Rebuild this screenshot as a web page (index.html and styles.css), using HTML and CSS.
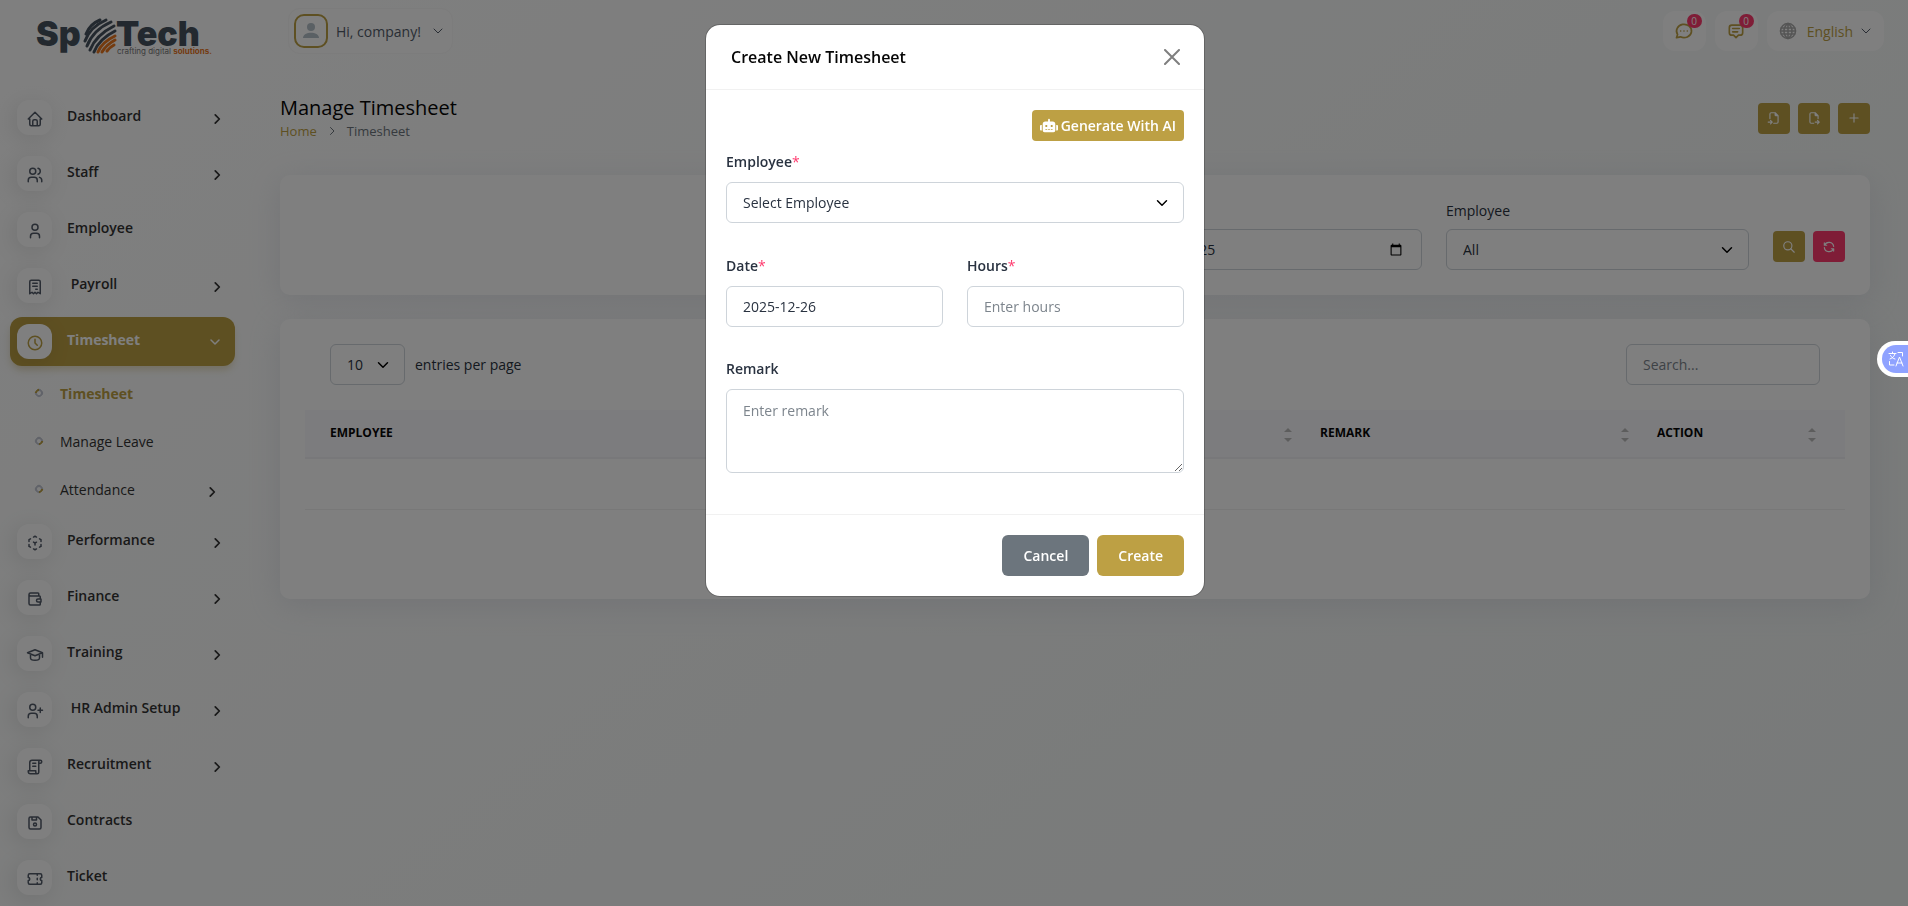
FILE: index.html
```html
<!DOCTYPE html>
<html lang="en">
<head>
    <meta charset="UTF-8">
    <meta name="viewport" content="width=device-width, initial-scale=1">
    <title>Manage Timesheet</title>
    <link rel="stylesheet" href="styles.css">
</head>
<body>

<!-- icon sprite -->
<svg class="sprite" aria-hidden="true">
    <symbol id="home" viewBox="0 0 24 24"><path d="M5 12H3l9-9 9 9h-2M5 12v7a2 2 0 0 0 2 2h10a2 2 0 0 0 2-2v-7M9 21v-6a2 2 0 0 1 2-2h2a2 2 0 0 1 2 2v6"/></symbol>
    <symbol id="users" viewBox="0 0 24 24"><circle cx="9" cy="7" r="4"/><path d="M3 21v-2a4 4 0 0 1 4-4h4a4 4 0 0 1 4 4v2M16 3.130a4 4 0 0 1 0 7.750M21 21v-2a4 4 0 0 0-3-3.850"/></symbol>
    <symbol id="user" viewBox="0 0 24 24"><circle cx="12" cy="7" r="4"/><path d="M6 21v-2a4 4 0 0 1 4-4h4a4 4 0 0 1 4 4v2"/></symbol>
    <symbol id="receipt" viewBox="0 0 24 24"><path d="M5 21V5a2 2 0 0 1 2-2h10a2 2 0 0 1 2 2v16l-3-2-2 2-2-2-2 2-2-2-3 2M9 7h6M9 11h6M13 15h2"/></symbol>
    <symbol id="clock" viewBox="0 0 24 24"><circle cx="12" cy="12" r="9"/><path d="M12 7v5l3 3"/></symbol>
    <symbol id="cube" viewBox="0 0 24 24"><path d="M6 17.600l-2-1.100V14M4 10V7.500l2-1.100M10 4.100L12 3l2 1.100M18 6.400l2 1.100V10M20 14v2.500l-2 1.120M14 19.900L12 21l-2-1.100M12 12l2-1.100M12 12v2.500M12 12l-2-1.120"/></symbol>
    <symbol id="wallet" viewBox="0 0 24 24"><path d="M17 8V5a1 1 0 0 0-1-1H6a2 2 0 0 0 0 4h12a1 1 0 0 1 1 1v3M19 16v3a1 1 0 0 1-1 1H6a2 2 0 0 1-2-2V6M20 12v4h-4a2 2 0 0 1 0-4h4"/></symbol>
    <symbol id="school" viewBox="0 0 24 24"><path d="M22 9L12 5 2 9l10 4 10-4v6M6 10.600V16a6 3 0 0 0 12 0v-5.400"/></symbol>
    <symbol id="user-plus" viewBox="0 0 24 24"><circle cx="9" cy="7" r="4"/><path d="M3 21v-2a4 4 0 0 1 4-4h4a4 4 0 0 1 4 4v2M16 11h6M19 8v6"/></symbol>
    <symbol id="script" viewBox="0 0 24 24"><path d="M15 21H6a3 3 0 0 1-3-3v-1h10v2a2 2 0 0 0 4 0V5a2 2 0 1 1 2 2h-2M19 3H8a3 3 0 0 0-3 3v11M9 7h4M9 11h4"/></symbol>
    <symbol id="floppy" viewBox="0 0 24 24"><path d="M6 4h10l4 4v10a2 2 0 0 1-2 2H6a2 2 0 0 1-2-2V6a2 2 0 0 1 2-2M14 4v4H8V4"/><circle cx="12" cy="14" r="2"/></symbol>
    <symbol id="ticket" viewBox="0 0 24 24"><path d="M15 5v2M15 11v2M15 17v2M5 5h14a2 2 0 0 1 2 2v3a2 2 0 0 0 0 4v3a2 2 0 0 1-2 2H5a2 2 0 0 1-2-2v-3a2 2 0 0 0 0-4V7a2 2 0 0 1 2-2"/></symbol>
    <symbol id="message-circle" viewBox="0 0 24 24"><path d="M3 20l1.300-3.900a9 8 0 1 1 3.400 2.900L3 20M12 12v.01M8 12v.01M16 12v.01"/></symbol>
    <symbol id="message" viewBox="0 0 24 24"><path d="M12 20l-3-3H7a3 3 0 0 1-3-3V8a3 3 0 0 1 3-3h10a3 3 0 0 1 3 3v6a3 3 0 0 1-3 3h-2l-3 3M8 9h8M8 13h6"/></symbol>
    <symbol id="world" viewBox="0 0 24 24"><circle cx="12" cy="12" r="10"/><path d="M3 8h18M3 16h18M2 12h20M12 2v20M12 2a12 12 0 0 0 0 20M12 2a12 12 0 0 1 0 20"/></symbol>
    <symbol id="file-import" viewBox="0 0 24 24"><path d="M14 3v4a1 1 0 0 0 1 1h4M5 13V5a2 2 0 0 1 2-2h7l5 5v11a2 2 0 0 1-2 2h-5.500M2 19h7m-3-3l3 3-3 3"/></symbol>
    <symbol id="file-export" viewBox="0 0 24 24"><path d="M14 3v4a1 1 0 0 0 1 1h4M11.500 21H7a2 2 0 0 1-2-2V5a2 2 0 0 1 2-2h7l5 5v5m-5 6h7m-3-3l3 3-3 3"/></symbol>
    <symbol id="plus" viewBox="0 0 24 24"><path d="M12 5v14M5 12h14"/></symbol>
    <symbol id="search" viewBox="0 0 24 24"><circle cx="10" cy="10" r="7"/><path d="M21 21l-6-6"/></symbol>
    <symbol id="refresh" viewBox="0 0 24 24"><path d="M20 11a8.100 8.100 0 0 0-15.500-2M4 5v4h4M4 13a8.100 8.100 0 0 0 15.500 2M20 19v-4h-4"/></symbol>
    <symbol id="chevron-right" viewBox="0 0 24 24"><path d="M9 5l7 7-7 7"/></symbol>
    <symbol id="chevron-down" viewBox="0 0 24 24"><path d="M4 8l8 8 8-8"/></symbol>
    <symbol id="close" viewBox="0 0 16 16"><path d="M1 1l14 14M15 1L1 15"/></symbol>
    <symbol id="robot" viewBox="0 0 20 16"><path fill-rule="evenodd" d="M9 3V1a1 1 0 0 1 2 0v2h3a3 3 0 0 1 3 3v7a2 2 0 0 1-2 2H5a2 2 0 0 1-2-2V6a3 3 0 0 1 3-3zM6 7v2h2V7zM12 7v2h2V7zM6 11.500v1h2v-1zM9 11.500v1h2v-1zM12 11.500v1h2v-1zM2 7v6H1a1 1 0 0 1-1-1V8a1 1 0 0 1 1-1zM18 7h1a1 1 0 0 1 1 1v4a1 1 0 0 1-1 1h-1z"/></symbol>
</svg>

<div class="layout">
    <nav class="sidebar">
        <a class="logo" href="#">
            <svg width="180" height="44" viewBox="0 0 180 44" role="img" aria-label="SpoTech">
                <text class="logo-name" x="0" y="31">Sp</text>
                <text class="logo-name" x="80" y="31">Tech</text>
                <g class="logo-lines">
                    <path d="M50 19Q54 9 64 5"/>
                    <path d="M49 26Q54 12 70 5"/>
                    <path d="M51 31Q57 15 75 7"/>
                    <path d="M54 35Q60 20 78 11"/>
                    <path d="M58 37Q63 24 79 16"/>
                </g>
                <g class="logo-lines logo-orange">
                    <path d="M62 37Q66 27 79 21"/>
                    <path d="M66 37Q70 30 79 25"/>
                    <path d="M71 36Q74 32 78 30"/>
                </g>
                <text class="logo-tag" x="81" y="39">crafting digital <tspan class="logo-strong">solutions.</tspan></text>
            </svg>
        </a>
        <ul class="menu">
            <li><a href="#" class="menu-link"><span class="micon"><svg><use href="#home"/></svg></span><span class="mtext">Dashboard</span><svg class="arrow"><use href="#chevron-right"/></svg></a></li>
            <li><a href="#" class="menu-link"><span class="micon"><svg><use href="#users"/></svg></span><span class="mtext">Staff</span><svg class="arrow"><use href="#chevron-right"/></svg></a></li>
            <li><a href="#" class="menu-link"><span class="micon"><svg><use href="#user"/></svg></span><span class="mtext">Employee</span></a></li>
            <li><a href="#" class="menu-link"><span class="micon"><svg><use href="#receipt"/></svg></span><span class="mtext">&nbsp;Payroll</span><svg class="arrow"><use href="#chevron-right"/></svg></a></li>
            <li>
                <a href="#" class="menu-link active"><span class="micon"><svg><use href="#clock"/></svg></span><span class="mtext">Timesheet</span><svg class="arrow"><use href="#chevron-down"/></svg></a>
                <ul class="submenu">
                    <li><a href="#" class="sub-link current"><span class="dot"></span>Timesheet</a></li>
                    <li><a href="#" class="sub-link"><span class="dot"></span>Manage Leave</a></li>
                    <li><a href="#" class="sub-link"><span class="dot"></span>Attendance<svg class="arrow"><use href="#chevron-right"/></svg></a></li>
                </ul>
            </li>
            <li><a href="#" class="menu-link"><span class="micon"><svg><use href="#cube"/></svg></span><span class="mtext">Performance</span><svg class="arrow"><use href="#chevron-right"/></svg></a></li>
            <li><a href="#" class="menu-link"><span class="micon"><svg><use href="#wallet"/></svg></span><span class="mtext">Finance</span><svg class="arrow"><use href="#chevron-right"/></svg></a></li>
            <li><a href="#" class="menu-link"><span class="micon"><svg><use href="#school"/></svg></span><span class="mtext">Training</span><svg class="arrow"><use href="#chevron-right"/></svg></a></li>
            <li><a href="#" class="menu-link"><span class="micon"><svg><use href="#user-plus"/></svg></span><span class="mtext">&nbsp;HR Admin Setup</span><svg class="arrow"><use href="#chevron-right"/></svg></a></li>
            <li><a href="#" class="menu-link"><span class="micon"><svg><use href="#script"/></svg></span><span class="mtext">Recruitment</span><svg class="arrow"><use href="#chevron-right"/></svg></a></li>
            <li><a href="#" class="menu-link"><span class="micon"><svg><use href="#floppy"/></svg></span><span class="mtext">Contracts</span></a></li>
            <li><a href="#" class="menu-link"><span class="micon"><svg><use href="#ticket"/></svg></span><span class="mtext">Ticket</span></a></li>
        </ul>
    </nav>

    <div class="main">
        <header class="topbar">
            <button type="button" class="user-btn">
                <span class="avatar"><svg viewBox="0 0 16 16"><circle cx="8" cy="4" r="4"/><path d="M0 15c0-7 16-7 16 0z"/></svg></span>
                Hi, company!
                <svg class="caret"><use href="#chevron-down"/></svg>
            </button>
            <div class="topbar-right">
                <button type="button" class="head-btn" aria-label="Messages"><svg><use href="#message-circle"/></svg><span class="badge">0</span></button>
                <button type="button" class="head-btn" aria-label="Comments"><svg><use href="#message"/></svg><span class="badge">0</span></button>
                <button type="button" class="head-btn lang"><svg class="world"><use href="#world"/></svg>English<svg class="caret"><use href="#chevron-down"/></svg></button>
            </div>
        </header>

        <div class="page-header">
            <div>
                <h1>Manage Timesheet</h1>
                <div class="breadcrumb"><a href="#">Home</a><svg><use href="#chevron-right"/></svg><span>Timesheet</span></div>
            </div>
            <div class="actions">
                <button type="button" class="btn-icon" aria-label="Import"><svg><use href="#file-import"/></svg></button>
                <button type="button" class="btn-icon" aria-label="Export"><svg><use href="#file-export"/></svg></button>
                <button type="button" class="btn-icon" aria-label="Create"><svg><use href="#plus"/></svg></button>
            </div>
        </div>

        <form class="card filters">
            <div class="field">
                <label for="filterDate">Date</label>
                <input type="date" id="filterDate" class="control" value="2025-12-25">
            </div>
            <div class="field">
                <label for="filterEmployee">Employee</label>
                <select id="filterEmployee" class="control"><option>All</option></select>
            </div>
            <div class="actions">
                <button type="button" class="btn-icon" aria-label="Apply"><svg><use href="#search"/></svg></button>
                <button type="reset" class="btn-icon danger" aria-label="Reset"><svg><use href="#refresh"/></svg></button>
            </div>
        </form>

        <div class="card list">
            <div class="list-top">
                <div class="per-page">
                    <select id="perPage" class="control"><option>10</option></select>
                    <label for="perPage">entries per page</label>
                </div>
                <input type="text" class="control search" placeholder="Search..." aria-label="Search">
            </div>
            <table>
                <thead>
                    <tr>
                        <th class="col-employee">Employee<span class="sorter"></span></th>
                        <th>Hours<span class="sorter"></span></th>
                        <th class="col-remark">Remark<span class="sorter"></span></th>
                        <th class="col-action">Action<span class="sorter"></span></th>
                    </tr>
                </thead>
                <tbody>
                    <tr><td colspan="4"></td></tr>
                </tbody>
            </table>
        </div>
    </div>
</div>

<div class="backdrop">
    <form class="modal" role="dialog" aria-labelledby="modalTitle">
        <div class="modal-header">
            <h2 id="modalTitle">Create New Timesheet</h2>
            <button type="button" class="close" aria-label="Close"><svg><use href="#close"/></svg></button>
        </div>
        <div class="modal-body">
            <button type="button" class="btn-ai"><svg><use href="#robot"/></svg>Generate With AI</button>
            <div class="group">
                <label for="employee">Employee<span class="req">*</span></label>
                <select id="employee" class="control"><option>Select Employee</option></select>
            </div>
            <div class="row">
                <div class="group">
                    <label for="date">Date<span class="req">*</span></label>
                    <input type="text" id="date" class="control" value="2025-12-26">
                </div>
                <div class="group">
                    <label for="hours">Hours<span class="req">*</span></label>
                    <input type="text" id="hours" class="control" placeholder="Enter hours">
                </div>
            </div>
            <div class="group">
                <label for="remark">Remark</label>
                <textarea id="remark" class="control" placeholder="Enter remark"></textarea>
            </div>
        </div>
        <div class="modal-footer">
            <button type="button" class="btn secondary">Cancel</button>
            <button type="submit" class="btn">Create</button>
        </div>
    </form>
</div>

<button type="button" class="translate" aria-label="Translate">
    <span>
        <svg viewBox="0 0 16 16"><path d="M1 2.500h7M4.500 1v1.500M2 8c3-1 4.500-3 5-5.500M2.500 4.500C3.500 6.500 5 7.500 7 8M10 1.500h4.500V5M1.500 10.500V14H6M8 15l3.500-9L15 15M9 12h5"/></svg>
    </span>
</button>

</body>
</html>
```
FILE: styles.css
```css
* {
    box-sizing: border-box;
}
body {
    margin: 0;
    height: 100vh;
    overflow: hidden;
    font-family: "Open Sans", sans-serif;
    font-size: 14px;
    line-height: 21px;
    color: #293240;
    background: linear-gradient(141deg, #fff 3%, #f0f4f3 99%);
}
a {
    color: inherit;
    text-decoration: none;
}
ul {
    list-style: none;
    margin: 0;
    padding: 0;
}
button, input, select, textarea {
    font: inherit;
    color: inherit;
}
button {
    border: none;
    padding: 0;
    cursor: pointer;
}
svg {
    fill: none;
    stroke: currentColor;
    stroke-width: 2;
    stroke-linecap: round;
    stroke-linejoin: round;
}
.sprite {
    display: none;
}
.layout {
    display: flex;
}

/* sidebar */
.sidebar {
    flex: 0 0 280px;
}
.logo {
    display: block;
    height: 93px;
    padding: 15px 0 0 36px;
}
.logo svg {
    overflow: visible;
}
.logo text {
    stroke: none;
}
.logo-name {
    font-family: Inter, sans-serif;
    font-size: 34px;
    font-weight: 900;
    fill: #47525e;
}
.logo-tag {
    font-family: Inter, sans-serif;
    font-size: 8px;
    fill: #777;
}
.logo-strong {
    font-weight: 700;
    fill: #e8761f;
}
.logo-lines {
    stroke: #47525e;
    stroke-width: 3;
}
.logo-orange {
    stroke: #e8761f;
}
.menu > li {
    padding: 0 45px 0 10px;
    margin-bottom: 7px;
}
.menu-link {
    display: flex;
    align-items: center;
    height: 49px;
    padding: 7px;
    border-radius: 12px;
    color: #333;
    font-weight: 600;
}
.micon {
    display: flex;
    align-items: center;
    justify-content: center;
    width: 35px;
    height: 35px;
    margin-right: 15px;
    border-radius: 12px;
    background: #fff;
    color: #525b69;
    box-shadow: -3px 4px 23px rgba(0, 0, 0, 0.1);
}
.micon svg {
    width: 18px;
    height: 18px;
    margin-top: 3px;
}
.mtext {
    padding-bottom: 4px;
}
.arrow {
    width: 14px;
    height: 14px;
    margin: 3px 4px 0 auto;
    stroke-width: 3;
}
.active {
    background: #bda044;
    color: #fff;
    font-weight: 700;
    box-shadow: 0 5px 7px -1px rgba(189, 160, 68, 0.3);
}
.active .micon {
    color: #bda044;
}
.active .arrow {
    width: 12px;
    height: 12px;
    margin: 0 7px 0 auto;
}
.submenu {
    margin-bottom: 7px;
}
.sub-link {
    display: flex;
    align-items: center;
    height: 48px;
    padding: 6px 12px 0 25px;
    color: #333;
}
.sub-link .arrow {
    margin-top: 6px;
}
.current {
    color: #bda044;
    font-weight: 700;
}
.dot {
    width: 8px;
    height: 8px;
    margin-right: 17px;
    border: 2px solid #c3c7d3;
    border-right-color: #bda044;
    border-radius: 50%;
    transform: rotate(45deg);
}
.current .dot {
    transform: rotate(-135deg);
}

/* top bar */
.main {
    flex: 1;
    padding: 8px 38px 0 0;
}
.topbar {
    display: flex;
    align-items: center;
    justify-content: space-between;
    padding: 0 0 0 8px;
    margin-right: -14px;
}
.user-btn {
    display: flex;
    align-items: center;
    height: 46px;
    padding: 0 8px 0 5px;
    border: 1px solid #f8f8f8;
    border-radius: 12px;
    background: #fff;
    color: #525b69;
}
.avatar {
    display: flex;
    align-items: center;
    justify-content: center;
    width: 34px;
    height: 34px;
    margin-right: 8px;
    border: 2px solid #bda044;
    border-radius: 10px;
}
.avatar svg {
    width: 16px;
    height: 16px;
    fill: #b5c0c9;
    stroke: none;
}
.caret {
    width: 12px;
    height: 12px;
    margin-left: 11px;
}
.topbar-right {
    display: flex;
    gap: 9px;
}
.head-btn {
    position: relative;
    display: flex;
    align-items: center;
    justify-content: center;
    width: 43px;
    height: 40px;
    border-radius: 12px;
    background: #fff;
    color: #bda044;
}
.head-btn svg {
    width: 20px;
    height: 20px;
}
.badge {
    position: absolute;
    top: 3px;
    right: 4px;
    width: 15px;
    height: 14px;
    border-radius: 10px;
    background: #ff3a6e;
    color: #fff;
    font-size: 10px;
    line-height: 14px;
}
.head-btn.lang {
    width: auto;
    padding: 0 12px;
}
.head-btn .world {
    width: 18px;
    margin-right: 10px;
    color: #aaa;
}
.head-btn .caret {
    width: 12px;
    height: 12px;
    margin-left: 7px;
    color: #525b69;
}

/* page header */
.page-header {
    display: flex;
    align-items: center;
    justify-content: space-between;
    margin: 41px 0 34px;
}
h1 {
    margin: 0;
    font-size: 20px;
    font-weight: 500;
    line-height: 26px;
    color: #060606;
}
.breadcrumb {
    display: flex;
    align-items: center;
    font-size: 13px;
    line-height: 20px;
    color: #6c757d;
}
.breadcrumb a {
    color: #bda044;
}
.breadcrumb svg {
    width: 12px;
    height: 12px;
    margin: 0 9px;
}
.actions {
    display: flex;
    gap: 8px;
}
.btn-icon {
    display: flex;
    align-items: center;
    justify-content: center;
    width: 32px;
    height: 31px;
    border-radius: 4px;
    background: #bda044;
    color: #fff;
}
.btn-icon svg {
    width: 14px;
    height: 14px;
}
.danger {
    background: #ff3a6e;
}

/* cards */
.card {
    margin-bottom: 24px;
    border-radius: 10px;
    background: #fff;
    box-shadow: 0 6px 30px rgba(182, 186, 203, 0.3);
}
.control {
    display: block;
    width: 100%;
    height: 41px;
    padding: 9px 16px;
    border: 1px solid #ced4da;
    border-radius: 6px;
    background-color: #fff;
    outline: none;
}
.control::placeholder {
    color: #7d858d;
    opacity: 1;
}
select.control {
    appearance: none;
    background-image: url("data:image/svg+xml,%3Csvg xmlns='http://www.w3.org/2000/svg' viewBox='0 0 16 16'%3E%3Cpath fill='none' stroke='%23000' stroke-linecap='round' stroke-linejoin='round' stroke-width='2' d='m2 5 6 6 6-6'/%3E%3C/svg%3E");
    background-repeat: no-repeat;
    background-position: right 15px center;
    background-size: 12px;
}
.filters {
    display: flex;
    align-items: flex-end;
    justify-content: flex-end;
    gap: 24px;
    padding: 25px;
}
.field {
    width: 303px;
}
.filters label {
    display: block;
    margin-bottom: 8px;
}
.filters .actions {
    padding-bottom: 8px;
}
.list {
    padding: 25px 25px 89px;
}
.list-top {
    display: flex;
    justify-content: space-between;
    padding: 0 25px 25px;
}
.per-page {
    display: flex;
    align-items: center;
    gap: 10px;
}
.per-page .control {
    width: 75px;
}
.list .search {
    width: 194px;
}
table {
    width: 100%;
    border-collapse: collapse;
    table-layout: fixed;
}
th {
    height: 48px;
    padding: 0 25px 2px;
    border-bottom: 2px solid #f1f1f4;
    background: #f8f9fd;
    color: #060606;
    font-size: 12px;
    text-align: left;
    text-transform: uppercase;
}
td {
    height: 51px;
    border-bottom: 1px solid #f1f1f1;
}
.col-employee {
    width: 36%;
}
.col-remark {
    width: 337px;
}
.col-action {
    width: 213px;
}
.sorter {
    float: right;
    margin: 6px -22px 0 0;
}
.col-action .sorter {
    margin-right: 4px;
}
.sorter::before, .sorter::after {
    content: "";
    display: block;
    border: 4px solid transparent;
    border-top: none;
    border-bottom-color: #bbb;
}
.sorter::after {
    margin-top: 6px;
    border-top: 4px solid #bbb;
    border-bottom: none;
}

/* modal */
.backdrop {
    position: fixed;
    inset: 0;
    padding: 24px 0 24px 2px;
    background: rgba(0, 0, 0, 0.5);
}
.modal {
    max-width: 500px;
    margin: 0 auto;
    border: 1px solid rgba(0, 0, 0, 0.2);
    border-radius: 15px;
    background: #fff;
    background-clip: padding-box;
}
.modal-header {
    display: flex;
    align-items: center;
    justify-content: space-between;
    height: 65px;
    padding: 0 24px 0 25px;
    border-bottom: 1px solid #f1f1f1;
}
h2 {
    margin: 0;
    font-size: 16px;
    font-weight: 600;
    color: #060606;
}
.close {
    display: flex;
    background: none;
    color: #7f7f7f;
}
.close svg {
    width: 16px;
    height: 16px;
}
.modal-body {
    padding: 20px 20px 41px;
}
.btn-ai {
    display: flex;
    align-items: center;
    gap: 3px;
    height: 31px;
    margin: 0 0 10px auto;
    padding: 0 8px;
    border-radius: 4px;
    background: #bda044;
    color: #fff;
    font-weight: 600;
}
.btn-ai svg {
    width: 18px;
    height: 16px;
    fill: currentColor;
    stroke: none;
}
.row {
    display: flex;
    gap: 24px;
    margin: 32px 0 31px;
}
.row .group {
    flex: 1;
}
.group label {
    display: block;
    margin-bottom: 10px;
    font-weight: 600;
}
.req {
    color: #ff3a6e;
    font-weight: 400;
}
textarea.control {
    height: 84px;
    padding: 10px 16px;
}
.modal-footer {
    display: flex;
    justify-content: flex-end;
    gap: 8px;
    padding: 20px;
    border-top: 1px solid #f1f1f1;
}
.btn {
    height: 41px;
    padding: 0 21px;
    border-radius: 6px;
    background: #bda044;
    color: #fff;
    font-weight: 600;
}
.secondary {
    background: #6c757d;
}

/* floating translate button on the window edge */
.translate {
    position: fixed;
    top: 341px;
    right: 0;
    width: 31px;
    height: 36px;
    padding: 4px 0 4px 5px;
    border-radius: 18px 0 0 18px;
    background: #fff;
}
.translate span {
    display: flex;
    align-items: center;
    height: 28px;
    padding-left: 6px;
    border-radius: 14px 0 0 14px;
    background: #8fa2ff;
    color: #fff;
}
.translate svg {
    width: 16px;
    height: 16px;
    stroke-width: 1;
}
```
